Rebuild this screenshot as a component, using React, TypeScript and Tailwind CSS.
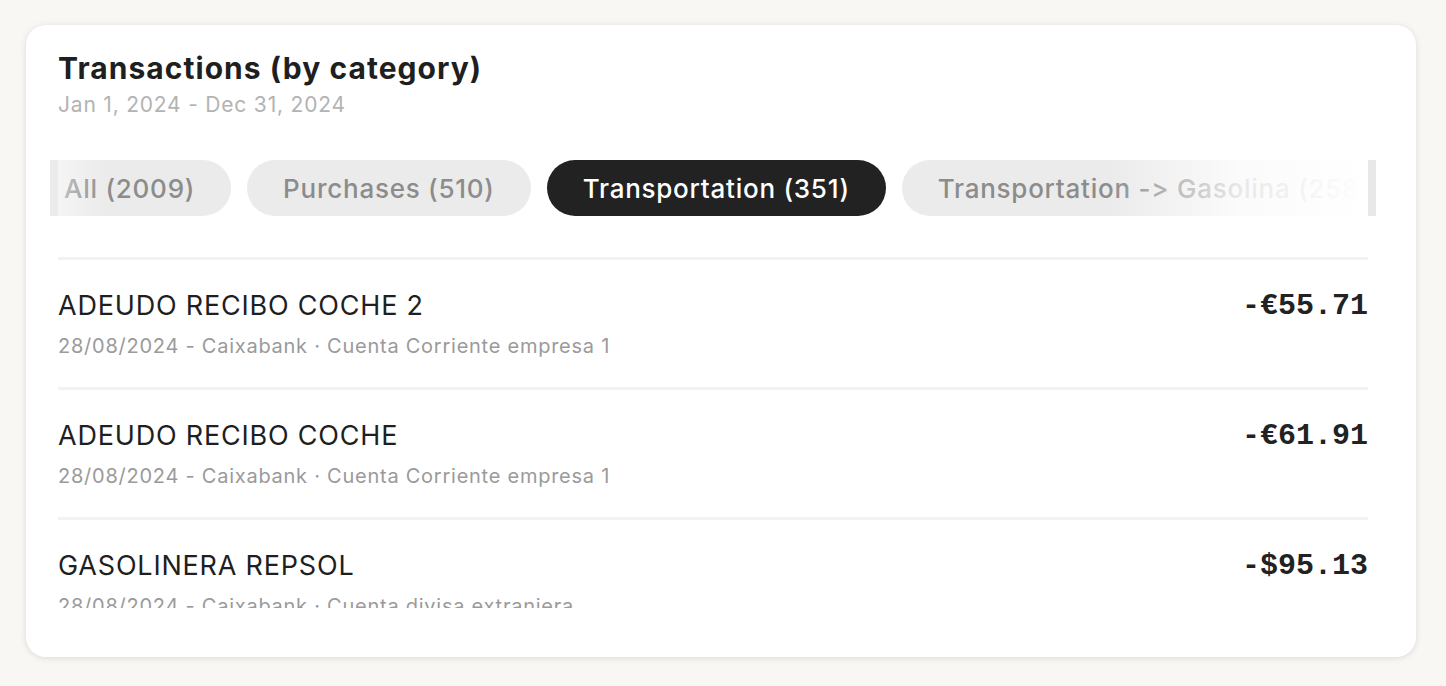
import React from 'react';

const categories = [
  { label: 'All (2009)', active: false },
  { label: 'Purchases (510)', active: false },
  { label: 'Transportation (351)', active: true },
  { label: 'Transportation -> Gasolina (258)', active: false },
  { label: 'Transportation -> Parking (93)', active: false },
];

const transactions = [
  {
    name: 'ADEUDO RECIBO COCHE 2',
    meta: '28/08/2024 - Caixabank · Cuenta Corriente empresa 1',
    amount: '-€55.71',
  },
  {
    name: 'ADEUDO RECIBO COCHE',
    meta: '28/08/2024 - Caixabank · Cuenta Corriente empresa 1',
    amount: '-€61.91',
  },
  {
    name: 'GASOLINERA REPSOL',
    meta: '28/08/2024 - Caixabank · Cuenta divisa extranjera',
    amount: '-$95.13',
  },
  {
    name: 'GASOLINERA CEPSA',
    meta: '27/08/2024 - Caixabank · Cuenta Corriente empresa 1',
    amount: '-€48.20',
  },
];

export default function App() {
  return (
    <div
      className="min-h-screen bg-[#f8f7f3] pl-[26px] pr-[30px] pt-[25px] [font-feature-settings:'calt'_0,'liga'_0]"
      style={{ fontFamily: 'Inter, "Noto Sans", sans-serif' }}
    >
      <div className="h-[632px] rounded-[20px] bg-white pl-8 pr-12 pt-[25px] shadow-[0_1px_6px_rgba(0,0,0,0.12)]">
        <h2 className="text-[30px] leading-9 font-bold tracking-[1.05px] text-[#1f1f1f]">
          Transactions (by category)
        </h2>
        <p className="mt-[5px] text-[21px] leading-7 tracking-[0.8px] text-[#b3b3b3]">Jan 1, 2024 - Dec 31, 2024</p>

        <div className="relative mt-[41px]">
          <div className="overflow-hidden">
            <div className="-ml-[30px] flex gap-4 whitespace-nowrap">
              {categories.map((c) => (
                <button
                  key={c.label}
                  className={
                    c.active
                      ? 'h-14 shrink-0 rounded-full bg-[#222222] px-9 text-[26px] font-medium tracking-[0.75px] text-white'
                      : 'h-14 shrink-0 rounded-full bg-[#ebebeb] px-9 text-[26px] font-medium tracking-[0.75px] text-[#8c8c8c]'
                  }
                >
                  {c.label}
                </button>
              ))}
            </div>
          </div>
          <div className="absolute top-0 -left-2 h-full w-2 bg-[#ebebeb]" />
          <div className="absolute top-0 left-0 h-full w-12 bg-gradient-to-r from-white/50 to-transparent" />
          <div className="absolute top-0 right-0 h-full w-[260px] bg-gradient-to-l from-white via-white/80 to-transparent" />
          <div className="absolute top-0 -right-2 h-full w-2 bg-[#e8e8e8]" />
        </div>

        <div className="mt-[41px] h-[351px] overflow-hidden">
          {transactions.map((t) => (
            <div key={t.name + t.amount} className="border-t-[3px] border-[#f3f2ee] pt-[29px] pb-[27px]">
              <div className="flex items-start justify-between">
                <div>
                  <div className="text-[27px] leading-[34px] tracking-[0.8px] text-[#1f1f1f]">{t.name}</div>
                  <div className="mt-[9px] text-[20px] leading-7 tracking-[0.75px] text-[#9a9a9a]">{t.meta}</div>
                </div>
                <div
                  className="text-[30px] leading-[34px] font-bold text-[#222222]"
                  style={{ fontFamily: '"Liberation Mono", monospace' }}
                >
                  {t.amount}
                </div>
              </div>
            </div>
          ))}
        </div>
      </div>
    </div>
  );
}
